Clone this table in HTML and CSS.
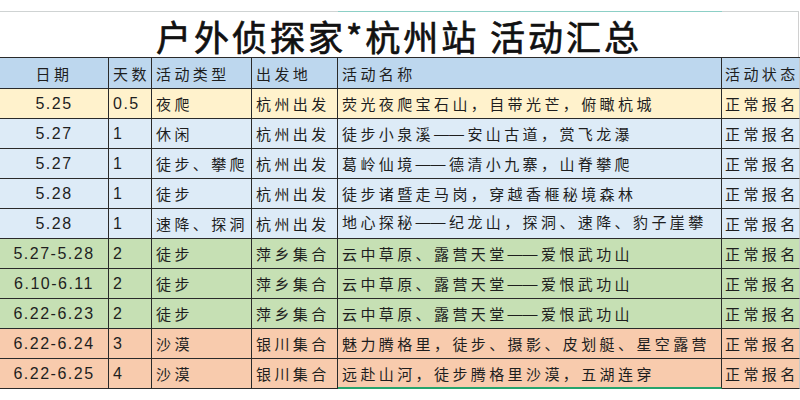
FILE: index.html
```html
<!DOCTYPE html>
<html lang="zh-CN">
<head>
<meta charset="utf-8">
<title>户外侦探家*杭州站 活动汇总</title>
<link rel="stylesheet" href="styles.css">
</head>
<body>
<div class="sheet">
  <div class="topline">
    <div class="seg seg-a"></div>
    <div class="seg seg-b"></div>
    <div class="seg seg-c"></div>
  </div>
  <div class="title">户外侦探家*杭州站 活动汇总</div>
  <div class="table">
    <div class="row head">
      <div class="c c1">日期</div>
      <div class="c c2">天数</div>
      <div class="c c3">活动类型</div>
      <div class="c c4">出发地</div>
      <div class="c c5">活动名称</div>
      <div class="c c6">活动状态</div>
    </div>
    <div class="row yellow">
      <div class="c c1 num">5.25</div>
      <div class="c c2 num">0.5</div>
      <div class="c c3">夜爬</div>
      <div class="c c4">杭州出发</div>
      <div class="c c5">荧光夜爬宝石山，自带光芒，俯瞰杭城</div>
      <div class="c c6">正常报名</div>
    </div>
    <div class="row blue">
      <div class="c c1 num">5.27</div>
      <div class="c c2 num">1</div>
      <div class="c c3">休闲</div>
      <div class="c c4">杭州出发</div>
      <div class="c c5">徒步小泉溪<span class="dash">——</span>安山古道，赏飞龙瀑</div>
      <div class="c c6">正常报名</div>
    </div>
    <div class="row blue">
      <div class="c c1 num">5.27</div>
      <div class="c c2 num">1</div>
      <div class="c c3">徒步、攀爬</div>
      <div class="c c4">杭州出发</div>
      <div class="c c5">葛岭仙境<span class="dash">——</span>德清小九寨，山脊攀爬</div>
      <div class="c c6">正常报名</div>
    </div>
    <div class="row blue">
      <div class="c c1 num">5.28</div>
      <div class="c c2 num">1</div>
      <div class="c c3">徒步</div>
      <div class="c c4">杭州出发</div>
      <div class="c c5">徒步诸暨走马岗，穿越香榧秘境森林</div>
      <div class="c c6">正常报名</div>
    </div>
    <div class="row blue">
      <div class="c c1 num">5.28</div>
      <div class="c c2 num">1</div>
      <div class="c c3">速降、探洞</div>
      <div class="c c4">杭州出发</div>
      <div class="c c5 high">地心探秘<span class="dash">——</span>纪龙山，探洞、速降、豹子崖攀</div>
      <div class="c c6">正常报名</div>
    </div>
    <div class="row green">
      <div class="c c1 num">5.27-5.28</div>
      <div class="c c2 num">2</div>
      <div class="c c3">徒步</div>
      <div class="c c4">萍乡集合</div>
      <div class="c c5">云中草原、露营天堂<span class="dash">——</span>爱恨武功山</div>
      <div class="c c6">正常报名</div>
    </div>
    <div class="row green">
      <div class="c c1 num">6.10-6.11</div>
      <div class="c c2 num">2</div>
      <div class="c c3">徒步</div>
      <div class="c c4">萍乡集合</div>
      <div class="c c5">云中草原、露营天堂<span class="dash">——</span>爱恨武功山</div>
      <div class="c c6">正常报名</div>
    </div>
    <div class="row green">
      <div class="c c1 num">6.22-6.23</div>
      <div class="c c2 num">2</div>
      <div class="c c3">徒步</div>
      <div class="c c4">萍乡集合</div>
      <div class="c c5">云中草原、露营天堂<span class="dash">——</span>爱恨武功山</div>
      <div class="c c6">正常报名</div>
    </div>
    <div class="row orange">
      <div class="c c1 num">6.22-6.24</div>
      <div class="c c2 num">3</div>
      <div class="c c3">沙漠</div>
      <div class="c c4">银川集合</div>
      <div class="c c5">魅力腾格里，徒步、摄影、皮划艇、星空露营</div>
      <div class="c c6">正常报名</div>
    </div>
    <div class="row orange">
      <div class="c c1 num">6.22-6.25</div>
      <div class="c c2 num">4</div>
      <div class="c c3">沙漠</div>
      <div class="c c4">银川集合</div>
      <div class="c c5 selected">远赴山河，徒步腾格里沙漠，五湖连穿</div>
      <div class="c c6">正常报名</div>
    </div>
  </div>
</div>
</body>
</html>
```

FILE: styles.css
```css
* {
  box-sizing: border-box;
}

html, body {
  margin: 0;
  padding: 0;
  background: #ffffff;
}

body {
  font-family: "Liberation Sans", "Noto Sans CJK SC", sans-serif;
  color: #1e1e1e;
  width: 800px;
  height: 400px;
  overflow: hidden;
}

.sheet {
  padding-top: 11px;
  width: 800px;
}

.topline {
  display: flex;
  height: 1px;
}

.seg {
  height: 1px;
}

.seg-a {
  width: 338px;
  background: #cfd3d3;
}

.seg-b {
  width: 384px;
  background: #8ccfc6;
}

.seg-c {
  width: 77px;
  background: #cfd3d3;
}

.title {
  width: 799px;
  height: 45px;
  border-right: 1px solid #d0d0d0;
  text-align: center;
  font-family: "Noto Sans CJK SC", sans-serif;
  font-weight: 400;
  -webkit-text-stroke: 0.7px #111111;
  font-size: 35px;
  line-height: 48px;
  letter-spacing: 3px;
  color: #111111;
}

.table {
  display: grid;
  grid-template-columns: 800px;
}

.row {
  display: grid;
  grid-template-columns: 109px 43px 100px 86px 384px 78px;
  height: 30px;
}

.row.head {
  height: 32px;
  background: #bdd7ee;
  border-top: 1px solid #2a2a2a;
}

.yellow { background: #fff2cc; }
.blue { background: #ddebf7; }
.green { background: #c6e0b4; }
.orange { background: #f8cbad; }

.c {
  display: flex;
  align-items: center;
  padding-left: 4px;
  border-right: 1px solid #2a2a2a;
  border-bottom: 1px solid #2a2a2a;
  font-size: 15px;
  letter-spacing: 3.4px;
  white-space: nowrap;
  overflow: hidden;
}

.head .c {
  padding-top: 1px;
}

.c1 {
  justify-content: center;
  padding-left: 0;
}

.c6 {
  border-right: 1px solid #c8c8c8;
  padding-left: 3px;
}

.num {
  font-size: 16px;
  letter-spacing: 1.5px;
}

.dash {
  letter-spacing: 0;
  margin-right: 3.4px;
}

.c.high {
  padding-bottom: 4px;
}

.c.selected {
  border-bottom: 2px solid #25a46c;
}
```
